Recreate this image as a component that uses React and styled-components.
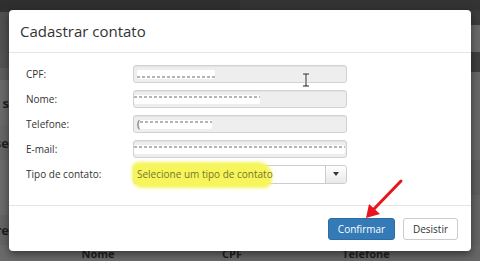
import React from "react";
import styled, { createGlobalStyle } from "styled-components";

const GlobalStyle = createGlobalStyle`
  html, body {
    margin: 0;
    padding: 0;
  }
  body {
    width: 480px;
    height: 261px;
    overflow: hidden;
    background: #666;
    font-family: "Open Sans", "DejaVu Sans", sans-serif;
  }
`;

const Screen = styled.div`
  position: relative;
  width: 480px;
  height: 261px;
  overflow: hidden;
`;

/* page behind the dialog */
const Backdrop = styled.div`
  display: flex;
  flex-direction: column;
  height: 100%;
`;

const Band = styled.div`
  flex: none;
  height: ${(p) => p.$h}px;
  background: linear-gradient(to right, ${(p) => p.$l} 50%, ${(p) => p.$r} 50%);
  display: flex;
  align-items: ${(p) => (p.$top ? "flex-start" : "center")};
`;

const EdgeWord = styled.span`
  width: 9px;
  display: flex;
  justify-content: flex-end;
  overflow: hidden;
  font-size: 13px;
  font-weight: 700;
  color: #1f1f1f;
  white-space: nowrap;
`;

const TableHead = styled.div`
  display: grid;
  grid-template-columns: 31px repeat(3, 134px);
  width: 100%;
  line-height: 13px;
  padding-top: 2px;
`;

const HeadCell = styled.span`
  text-align: center;
  font-size: 11px;
  font-weight: 700;
  color: #1f1f1f;
`;

/* dialog */
const Modal = styled.div`
  position: absolute;
  left: 9px;
  top: 10px;
  width: 462px;
  height: 241px;
  background: #fff;
  border-radius: 4px;
  box-shadow: 0 3px 9px rgba(0, 0, 0, 0.5);
  display: flex;
  flex-direction: column;
`;

const Header = styled.div`
  height: 43px;
  box-sizing: border-box;
  border-bottom: 1px solid #e5e5e5;
  padding: 0 11px;
  display: flex;
  align-items: center;
`;

const Title = styled.h4`
  margin: 0;
  font-size: 15px;
  font-weight: 400;
  color: #333;
  line-height: 1;
`;

const Form = styled.div`
  height: 153px;
  box-sizing: border-box;
  border-bottom: 1px solid #e5e5e5;
  padding: 12px 0 0 17px;
  display: grid;
  grid-template-columns: 107px 214px;
  grid-auto-rows: 18px;
  row-gap: 7px;
  align-items: center;
`;

const Label = styled.label`
  font-size: 10px;
  color: #333;
`;

const Field = styled.div`
  height: 18px;
  box-sizing: border-box;
  background: #eee;
  border: 1px solid #d2d2d2;
  border-radius: 3px;
  box-shadow: inset 0 1px 1px rgba(0, 0, 0, 0.05);
  display: flex;
  align-items: center;
  padding-left: ${(p) => p.$pad || 0}px;
  font-size: 10px;
  color: #555;
`;

/* blurred-out personal data */
const Redacted = styled.span`
  display: block;
  width: ${(p) => p.$w}px;
  height: 9px;
  background:
    repeating-linear-gradient(90deg, #b5b5b5 0 3px, #fff 3px 5px) 0 ${(p) => p.$dots}px / 100% 2px no-repeat,
    #fff;
  border-radius: 2px;
  filter: blur(0.6px);
`;

const Select = styled.div`
  height: 19px;
  box-sizing: border-box;
  background: #fff;
  border: 1px solid #ccc;
  border-radius: 3px;
  display: flex;
  align-items: stretch;
`;

const SelectText = styled.span`
  position: relative;
  flex: 1;
  display: flex;
  align-items: center;
  padding-left: 3px;
  font-size: 10px;
  color: #77772a;
  z-index: 0;

  &::before {
    content: "";
    position: absolute;
    left: -2px;
    top: -4px;
    width: 140px;
    height: 26px;
    background: #f6f55c;
    border-radius: 6px 14px 8px 10px;
    filter: blur(1.5px);
    z-index: -1;
  }
`;

const Caret = styled.span`
  width: 20px;
  border-left: 1px solid #ccc;
  border-radius: 0 3px 3px 0;
  background: linear-gradient(#fff, #e8e8e8);
  display: flex;
  align-items: center;
  justify-content: center;

  &::after {
    content: "";
    border-left: 3px solid transparent;
    border-right: 3px solid transparent;
    border-top: 4px solid #333;
  }
`;

const Footer = styled.div`
  flex: 1;
  display: flex;
  justify-content: flex-end;
  align-items: flex-start;
  gap: 8px;
  padding: 12px 13px 0 0;
`;

const Button = styled.button`
  width: ${(p) => p.$w}px;
  height: 22px;
  padding: 0;
  border-radius: 3px;
  font-family: inherit;
  font-size: 10px;
  border: 1px solid ${(p) => (p.$primary ? "#2e6da4" : "#ccc")};
  background: ${(p) => (p.$primary ? "#337ab7" : "#fff")};
  color: ${(p) => (p.$primary ? "#fff" : "#333")};
`;

const Overlay = styled.svg`
  position: absolute;
  left: ${(p) => p.$x}px;
  top: ${(p) => p.$y}px;
  overflow: visible;
`;

const bands = [
  { h: 10, l: "#2f2f2f", r: "#333" },
  { h: 2, l: "#333", r: "#3b3b3b" },
  { h: 13, l: "#505050", r: "#3c3c3c" },
  { h: 27, l: "#515151", r: "#696969" },
  { h: 16, l: "#535353", r: "#3e3e3e" },
  { h: 4, l: "#5d5d5d", r: "#3e3e3e" },
  { h: 8, l: "#5d5d5d", r: "#676767" },
  { h: 45, l: "#6a6a6a", r: "#686868", word: "s" },
  { h: 35, l: "#666", r: "#686868", word: "se" },
  { h: 35, l: "#6b6b6b", r: "#5e5e5e" },
  { h: 20, l: "#6b6b6b", r: "#646464" },
  { h: 30, l: "#646464", r: "#646464", word: "re" },
];

export default function App() {
  return (
    <>
      <GlobalStyle />
      <Screen>
        <Backdrop>
          {bands.map((b, i) => (
            <Band key={i} $h={b.h} $l={b.l} $r={b.r}>
              {b.word && <EdgeWord>{b.word}</EdgeWord>}
            </Band>
          ))}
          <Band $h={16} $l="#6a6a6a" $r="#666" $top>
            <TableHead>
              <span />
              <HeadCell>Nome</HeadCell>
              <HeadCell>CPF</HeadCell>
              <HeadCell>Telefone</HeadCell>
            </TableHead>
          </Band>
        </Backdrop>

        <Modal>
          <Header>
            <Title>Cadastrar contato</Title>
          </Header>
          <Form>
            <Label>CPF:</Label>
            <Field $pad={3}>
              <Redacted $w={78} $dots={6} />
            </Field>
            <Label>Nome:</Label>
            <Field>
              <Redacted $w={126} $dots={1} />
            </Field>
            <Label>Telefone:</Label>
            <Field $pad={3}>
              (<Redacted $w={72} $dots={1} />
            </Field>
            <Label>E-mail:</Label>
            <Field>
              <Redacted $w={211} $dots={1} />
            </Field>
            <Label>Tipo de contato:</Label>
            <Select>
              <SelectText>Selecione um tipo de contato</SelectText>
              <Caret />
            </Select>
          </Form>
          <Footer>
            <Button $primary $w={67}>Confirmar</Button>
            <Button $w={55}>Desistir</Button>
          </Footer>
        </Modal>

        <Overlay $x={302} $y={73} width="8" height="14" viewBox="0 0 8 14">
          <path d="M1 1h6M4 1v12M1 13h6" stroke="#fff" strokeWidth="2.4" fill="none" />
          <path d="M1 1h6M4 1v12M1 13h6" stroke="#222" strokeWidth="1" fill="none" />
        </Overlay>

        <Overlay $x={360} $y={175} width="50" height="50" viewBox="0 0 50 50">
          <path d="M41 6L13 35" stroke="#e8161c" strokeWidth="3" strokeLinecap="round" fill="none" />
          <polygon points="6,43 9,29 20,39" fill="#e8161c" />
        </Overlay>
      </Screen>
    </>
  );
}
